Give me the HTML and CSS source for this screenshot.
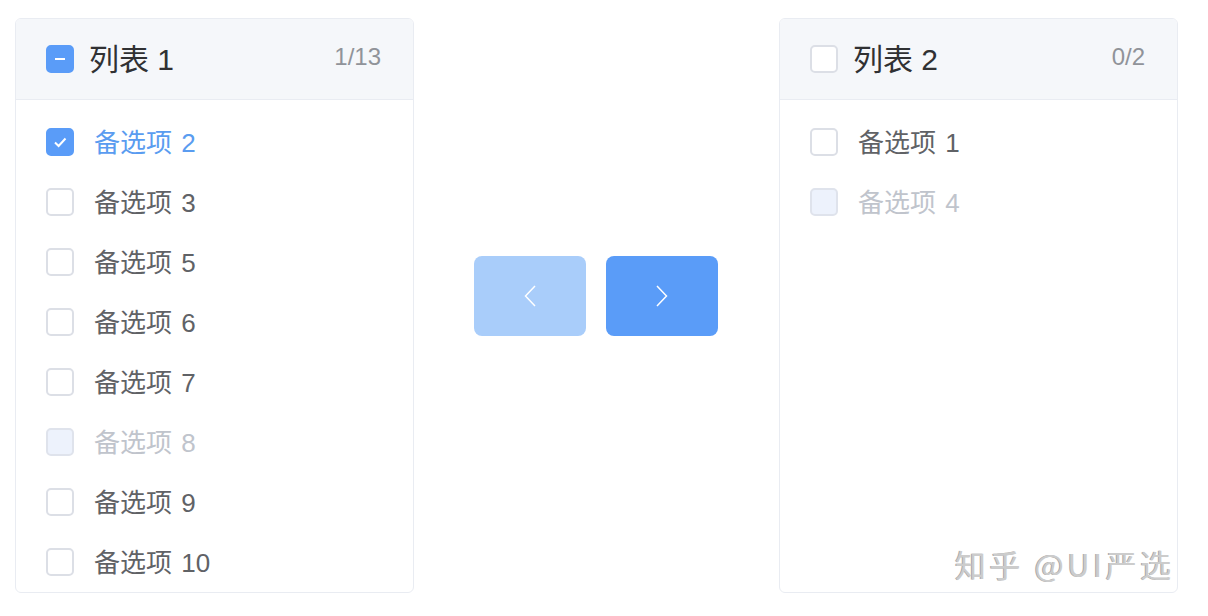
FILE: index.html
```html
<!DOCTYPE html>
<html lang="zh">
<head>
    <meta charset="UTF-8">
    <title>穿梭框</title>
    <link rel="stylesheet" href="styles.css">
</head>
<body>
<div class="transfer">
    <div class="panel">
        <div class="panel-header">
            <span class="box box-half"></span>
            <span class="title">列表 1</span>
            <span class="count">1/13</span>
        </div>
        <div class="panel-body">
            <div class="item checked"><span class="box box-on"><svg viewBox="0 0 28 28" width="28" height="28"><path d="M9 14.5 L12.6 18 L19.5 10.5" fill="none" stroke="#fff" stroke-width="2"/></svg></span><span class="label">备选项 2</span></div>
            <div class="item"><span class="box"></span><span class="label">备选项 3</span></div>
            <div class="item"><span class="box"></span><span class="label">备选项 5</span></div>
            <div class="item"><span class="box"></span><span class="label">备选项 6</span></div>
            <div class="item"><span class="box"></span><span class="label">备选项 7</span></div>
            <div class="item disabled"><span class="box"></span><span class="label">备选项 8</span></div>
            <div class="item"><span class="box"></span><span class="label">备选项 9</span></div>
            <div class="item"><span class="box"></span><span class="label">备选项 10</span></div>
        </div>
    </div>

    <div class="buttons">
        <button class="btn btn-off"><svg viewBox="0 0 14 24" width="14" height="24"><path d="M12 2 L2.5 12 L12 22" fill="none" stroke="#fff" stroke-width="1.5"/></svg></button>
        <button class="btn"><svg viewBox="0 0 14 24" width="14" height="24"><path d="M2 2 L11.5 12 L2 22" fill="none" stroke="#fff" stroke-width="1.5"/></svg></button>
    </div>

    <div class="panel">
        <div class="panel-header">
            <span class="box"></span>
            <span class="title">列表 2</span>
            <span class="count">0/2</span>
        </div>
        <div class="panel-body">
            <div class="item"><span class="box"></span><span class="label">备选项 1</span></div>
            <div class="item disabled"><span class="box"></span><span class="label">备选项 4</span></div>
        </div>
    </div>
</div>
<div class="watermark">知乎 @UI严选</div>
</body>
</html>
```

FILE: styles.css
```css
body {
    margin: 0;
    padding: 18px 0 0 15px;
    background: #ffffff;
    font-family: "Liberation Sans", "Noto Sans CJK SC", sans-serif;
}
.transfer {
    display: flex;
    align-items: flex-start;
    width: 1163px;
}
.panel {
    width: 399px;
    height: 575px;
    border: 1px solid #e9ecf2;
    border-radius: 6px;
    overflow: hidden;
    box-sizing: border-box;
    flex-shrink: 0;
}
.panel-header {
    height: 81px;
    background: #f5f7fa;
    border-bottom: 1px solid #e9ecf2;
    box-sizing: border-box;
    display: flex;
    align-items: center;
    padding: 0 32px 0 30px;
}
.title {
    font-size: 30px;
    color: #303133;
    margin-left: 15px;
    flex: 1;
    position: relative;
    top: -2px;
}
.count {
    font-size: 24px;
    color: #909399;
    position: relative;
    top: -2px;
}
.panel-body {
    padding-top: 12px;
}
.item {
    height: 60px;
    display: flex;
    align-items: center;
    padding-left: 30px;
}
.label {
    font-size: 26px;
    color: #606266;
    margin-left: 20px;
    word-spacing: 2px;
    position: relative;
    top: -2px;
}
.box {
    width: 28px;
    height: 28px;
    box-sizing: border-box;
    border: 2px solid #dcdfe6;
    border-radius: 5px;
    background: #ffffff;
    display: flex;
    align-items: center;
    justify-content: center;
    flex-shrink: 0;
}
.box svg {
    display: block;
    margin: -2px;
}
.box-on, .box-half {
    background: #5a9cf8;
    border-color: #5a9cf8;
}
.box-half::after {
    content: "";
    width: 10px;
    height: 2px;
    background: #ffffff;
}
.checked .label {
    color: #5a9cf0;
}
.disabled .box {
    background: #edf2fc;
    border-color: #dfe3ec;
}
.disabled .label {
    color: #c0c4cc;
}
.buttons {
    flex: 1;
    display: flex;
    justify-content: center;
    gap: 20px;
    margin-top: 238px;
    padding-right: 2px;
}
.btn {
    width: 112px;
    height: 80px;
    border: none;
    border-radius: 8px;
    background: #5a9cf8;
    display: flex;
    align-items: center;
    justify-content: center;
    padding: 0;
}
.btn-off {
    background: #a9cdfa;
}
.watermark {
    position: absolute;
    left: 955px;
    top: 541px;
    font-family: "Noto Sans CJK SC", sans-serif;
    font-size: 31px;
    color: #cccccc;
    text-shadow: -1px 0 0 #a8a8a8;
    white-space: nowrap;
    letter-spacing: 3.5px;
}
```
